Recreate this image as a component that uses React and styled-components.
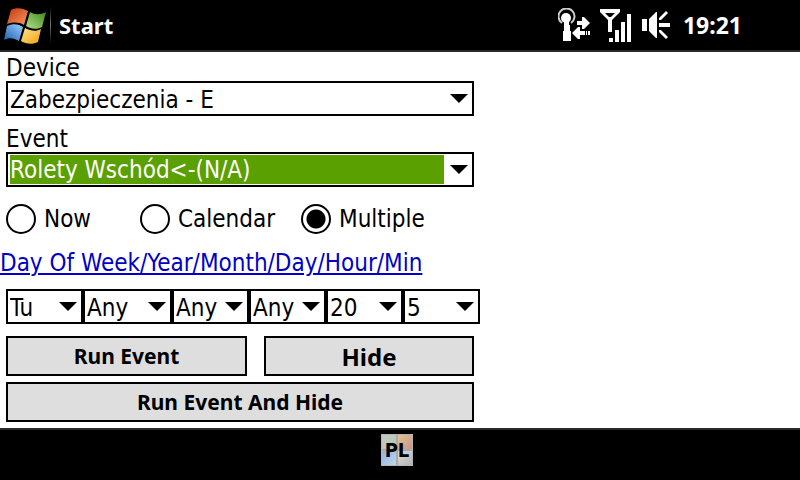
import React, { useState } from 'react';
import styled, { createGlobalStyle } from 'styled-components';

const GlobalStyle = createGlobalStyle`
  * {
    box-sizing: border-box;
  }
  body {
    margin: 0;
    background: #fff;
    color: #000;
    font-family: 'DejaVu Sans Condensed', 'Noto Sans', sans-serif;
    font-size: 24px;
  }
`;

const Page = styled.div`
  display: flex;
  flex-direction: column;
  min-height: 100vh;
`;

const TopBar = styled.header`
  display: flex;
  align-items: center;
  justify-content: space-between;
  height: 52px;
  padding: 0 58px 0 4px;
  background: #000;
  border-bottom: 2px solid #2b2b2b;
  color: #fff;
  font-family: 'Noto Sans', sans-serif;
  font-size: 22px;
  font-weight: bold;
`;

const StartButton = styled.button`
  display: flex;
  align-items: center;
  gap: 8px;
  padding: 0;
  border: 0;
  background: none;
  color: inherit;
  font: inherit;
`;

const Divider = styled.span`
  width: 1px;
  height: 38px;
  margin-left: -4px;
  background: linear-gradient(#000, #777, #000);
`;

const Tray = styled.div`
  display: flex;
  align-items: center;
  gap: 10px;
`;

const Clock = styled.time`
  padding-left: 3px;
  font-size: 23px;
`;

const Form = styled.main`
  flex: 1;
  width: 60%;
  padding-left: 6px;
`;

const Field = styled.div`
  display: flex;
  flex-direction: column;
  padding-top: 4px;
  margin: 0 6px 7px 0;
`;

const FieldLabel = styled.label`
  line-height: 25px;
`;

const SelectBox = styled.div`
  position: relative;
  height: 35px;

  &::after {
    content: '';
    position: absolute;
    top: 13px;
    right: 6px;
    border: solid transparent;
    border-width: 9px 9px 0;
    border-top-color: #000;
    pointer-events: none;
  }
`;

const StyledSelect = styled.select`
  appearance: none;
  width: 100%;
  height: 100%;
  padding: ${(props) => (props.$selected ? '1px 28px 1px 2px' : '2px 24px 0 2px')};
  border: 2px solid #000;
  border-radius: 0;
  background: ${(props) => (props.$selected ? '#5aa000' : '#fff')};
  background-clip: content-box;
  color: ${(props) => (props.$selected ? '#fff' : '#000')};
  font: inherit;
  outline: none;
`;

const Choices = styled.div`
  display: flex;
  margin: 17px 6px 15px 0;
`;

const Choice = styled.label`
  display: flex;
  align-items: center;
  gap: 8px;
  width: ${(props) => props.$width};
`;

const Radio = styled.input`
  appearance: none;
  width: 30px;
  height: 30px;
  margin: 0;
  border: 2px solid #000;
  border-radius: 50%;

  &:checked {
    background: radial-gradient(circle, #000 9px, #fff 10px);
  }
`;

const ScheduleLink = styled.a`
  display: block;
  margin: 0 0 12px -6px;
  color: #0000c8;
  line-height: 28px;
  white-space: nowrap;
  text-decoration-thickness: 2px;
  text-underline-offset: 2px;
`;

const Schedule = styled.div`
  display: grid;
  grid-template-columns: 77fr 89fr 77fr 77fr 77fr 77fr;
`;

const Buttons = styled.div`
  display: grid;
  grid-template-columns: 241fr 210fr;
  gap: 6px 17px;
  margin: 12px 6px 6px 0;
`;

const Button = styled.button`
  grid-column: ${(props) => (props.$wide ? '1 / -1' : 'auto')};
  height: 40px;
  padding: 0;
  border: 2px solid #000;
  background: #dedede;
  color: #000;
  font-family: 'Noto Sans', sans-serif;
  font-size: ${(props) => (props.$large ? '24px' : '21px')};
  font-weight: bold;
`;

const BottomBar = styled.footer`
  display: flex;
  justify-content: center;
  height: 52px;
  padding: 4px 6px 0 0;
  background: #000;
  border-top: 2px solid #2b2b2b;
`;

const KeyboardButton = styled.button`
  display: grid;
  place-items: center;
  width: 32px;
  height: 32px;
  padding: 0;
  border: 1px solid #b4b4b4;
  background:
    linear-gradient(#aaa, #aaa) center / 2px 100% no-repeat,
    linear-gradient(#aaa, #aaa) center / 100% 2px no-repeat,
    linear-gradient(135deg, #c8c8c8, #a8cca8) 0 0 / 50% 50% no-repeat,
    linear-gradient(135deg, #dcc890, #d09088) 100% 0 / 50% 50% no-repeat,
    linear-gradient(135deg, #8cb4e4, #c4d4e8) 0 100% / 50% 50% no-repeat,
    linear-gradient(135deg, #ddd, #b4b4b4) 100% 100% / 50% 50% no-repeat;
  color: #000;
  font-family: 'DejaVu Sans Condensed', sans-serif;
  font-size: 20px;
  font-weight: bold;
`;

const WindowsLogo = () => (
  <svg width="42" height="38" viewBox="0 0 42 38" aria-hidden="true">
    <defs>
      <linearGradient id="red" x1="0" y1="0" x2="1" y2="1">
        <stop offset="0" stopColor="#c8360c" />
        <stop offset="1" stopColor="#f69a62" />
      </linearGradient>
      <linearGradient id="green" x1="0" y1="1" x2="1" y2="0">
        <stop offset="0" stopColor="#b4e08c" />
        <stop offset="1" stopColor="#3c8c14" />
      </linearGradient>
      <linearGradient id="blue" x1="0" y1="1" x2="1" y2="0">
        <stop offset="0" stopColor="#1e5cb4" />
        <stop offset="1" stopColor="#9cd0f8" />
      </linearGradient>
      <linearGradient id="yellow" x1="0" y1="0" x2="1" y2="1">
        <stop offset="0" stopColor="#ffe68c" />
        <stop offset="1" stopColor="#f0a010" />
      </linearGradient>
    </defs>
    <path d="M7 4C12 1 19 2 24 5L20 19C15 16 9 16 3 18Z" fill="url(#red)" />
    <path d="M26 6C31 9 36 9 42 6L38 21C33 24 27 23 22 20Z" fill="url(#green)" />
    <path d="M3 20C9 17 15 18 19 21L15 35C10 32 5 31 0 34Z" fill="url(#blue)" />
    <path d="M21 22C27 25 32 26 37 23L34 36C28 39 22 38 17 35Z" fill="url(#yellow)" />
  </svg>
);

const DataIcon = () => (
  <svg width="32" height="34" viewBox="0 0 32 34" fill="#fff" aria-hidden="true">
    <path d="M4 15A8 8 0 1 1 13 15" fill="none" stroke="#ccc" strokeWidth="2" />
    <circle cx="8" cy="10" r="5" />
    <path d="M6 13h5v4h1v6h1v10H5V23h1z" />
    <path d="M19 13h5V9h2l6 6-6 6h-2v-4h-5z" />
    <path d="M14 25l6-6h2v4h5v4h-5v4h-2zM28 23h1v4h-1zM30 23h2v4h-2z" />
  </svg>
);

const SignalIcon = () => (
  <svg width="32" height="34" viewBox="0 0 32 34" fill="#fff" aria-hidden="true">
    <path d="M0 1h20v3l-8 8v12H8V12L0 4zM5 5l4 4h2l4-4z" fillRule="evenodd" />
    <path d="M9 30h4v4H9zM15 22h4v12h-4zM21 14h4v20h-4zM27 6h4v28h-4z" />
  </svg>
);

const SpeakerIcon = () => (
  <svg width="28" height="28" viewBox="0 0 28 28" fill="#fff" aria-hidden="true">
    <path d="M0 8h5v12H0zM7 8l7-7h1v26h-1l-7-7z" />
    <path d="M17 12h11v4H17zM17 7l7-7 2 2-7 7h-2zM17 19h2l7 7-2 2-7-7z" />
  </svg>
);

const Select = ({ options, selected, ...rest }) => (
  <SelectBox>
    <StyledSelect $selected={selected} {...rest}>
      {options.map((option) => (
        <option key={option}>{option}</option>
      ))}
    </StyledSelect>
  </SelectBox>
);

const MODES = [
  { name: 'Now', width: '134px' },
  { name: 'Calendar', width: '161px' },
  { name: 'Multiple', width: 'auto' },
];

const SCHEDULE = [
  { name: 'Day of week', value: 'Tu' },
  { name: 'Year', value: 'Any' },
  { name: 'Month', value: 'Any' },
  { name: 'Day', value: 'Any' },
  { name: 'Hour', value: '20' },
  { name: 'Minute', value: '5' },
];

const App = () => {
  const [mode, setMode] = useState('Multiple');

  return (
    <Page>
      <GlobalStyle />
      <TopBar>
        <StartButton>
          <WindowsLogo />
          <Divider />
          Start
        </StartButton>
        <Tray>
          <DataIcon />
          <SignalIcon />
          <SpeakerIcon />
          <Clock>19:21</Clock>
        </Tray>
      </TopBar>
      <Form>
        <Field>
          <FieldLabel htmlFor="device">Device</FieldLabel>
          <Select id="device" options={['Zabezpieczenia - E']} />
        </Field>
        <Field>
          <FieldLabel htmlFor="event">Event</FieldLabel>
          <Select id="event" options={['Rolety Wschód<-(N/A)']} selected />
        </Field>
        <Choices>
          {MODES.map(({ name, width }) => (
            <Choice key={name} $width={width}>
              <Radio
                type="radio"
                name="mode"
                checked={mode === name}
                onChange={() => setMode(name)}
              />
              {name}
            </Choice>
          ))}
        </Choices>
        <ScheduleLink href="#schedule">Day Of Week/Year/Month/Day/Hour/Min</ScheduleLink>
        <Schedule id="schedule">
          {SCHEDULE.map(({ name, value }) => (
            <Select key={name} aria-label={name} options={[value]} />
          ))}
        </Schedule>
        <Buttons>
          <Button>Run Event</Button>
          <Button $large>Hide</Button>
          <Button $wide>Run Event And Hide</Button>
        </Buttons>
      </Form>
      <BottomBar>
        <KeyboardButton>PL</KeyboardButton>
      </BottomBar>
    </Page>
  );
};

export default App;
